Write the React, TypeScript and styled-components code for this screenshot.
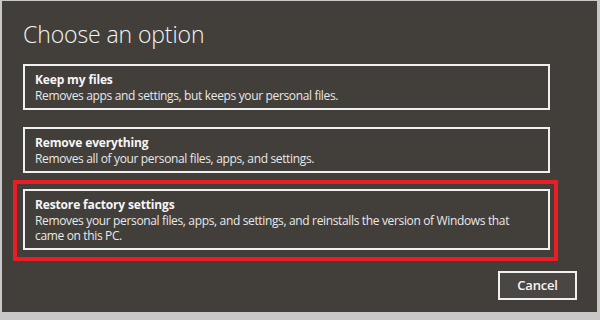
import React from "react";
import styled, { createGlobalStyle } from "styled-components";

const Global = createGlobalStyle`
  html, body { margin: 0; padding: 0; background: #c7c7c7; }
  body { font-family: "Open Sans", "Noto Sans", sans-serif; }
`;

const Backdrop = styled.div`
  width: 600px;
  height: 320px;
  box-sizing: border-box;
  padding: 1px 3px 8px 2px;
  background: #c8c8c8;
  overflow: hidden;
`;

const Panel = styled.div`
  height: 100%;
  box-sizing: border-box;
  background: #423f3b;
  padding: 18px 20px 0 21px;
  display: flex;
  flex-direction: column;
  color: #f2f2f2;
`;

const Title = styled.h1`
  margin: 0 0 14px 0;
  font-weight: 300;
  font-size: 23px;
  line-height: 31px;
  letter-spacing: -0.1px;
  color: #f4f4f4;
`;

const Options = styled.div`
  display: flex;
  flex-direction: column;
  gap: 17px;
`;

const Option = styled.button<{ $tall?: boolean }>`
  all: unset;
  box-sizing: border-box;
  width: 527px;
  min-height: ${(p) => (p.$tall ? 61 : 45)}px;
  border: 2px solid #f0f0f0;
  padding: 6px 10px 5px 10px;
  display: flex;
  flex-direction: column;
  font-family: "Open Sans", "Noto Sans", sans-serif;
  cursor: pointer;
`;

const OptionTitle = styled.span`
  font-size: 12px;
  font-weight: 700;
  line-height: 16px;
  color: #f6f6f6;
  letter-spacing: -0.15px;
`;

const OptionDesc = styled.span`
  font-size: 12px;
  font-weight: 400;
  line-height: 15px;
  color: #e8e8e8;
  letter-spacing: -0.35px;
`;

const Highlight = styled.div`
  margin: -10px 0 0 -10px;
  width: 545px;
  box-sizing: border-box;
  border: 4px solid #ec1c24;
  padding: 5px 4px 7px 6px;
`;

const Footer = styled.div`
  display: flex;
  justify-content: flex-end;
  margin-top: 10px;
`;

const CancelButton = styled.button`
  all: unset;
  box-sizing: border-box;
  width: 79px;
  height: 29px;
  border: 2px solid #f0f0f0;
  background: #4a4643;
  color: #f6f6f6;
  font-family: "Open Sans", "Noto Sans", sans-serif;
  font-size: 13px;
  font-weight: 600;
  text-align: center;
  line-height: 25px;
  letter-spacing: -0.2px;
  cursor: pointer;
`;

export default function App() {
  return (
    <>
      <Global />
      <Backdrop>
        <Panel>
          <Title>Choose an option</Title>
          <Options>
            <Option>
              <OptionTitle>Keep my files</OptionTitle>
              <OptionDesc>Removes apps and settings, but keeps your personal files.</OptionDesc>
            </Option>
            <Option>
              <OptionTitle>Remove everything</OptionTitle>
              <OptionDesc>Removes all of your personal files, apps, and settings.</OptionDesc>
            </Option>
            <Highlight>
              <Option $tall>
                <OptionTitle>Restore factory settings</OptionTitle>
                <OptionDesc>
                  Removes your personal files, apps, and settings, and reinstalls the version of Windows that came on this PC.
                </OptionDesc>
              </Option>
            </Highlight>
          </Options>
          <Footer>
            <CancelButton>Cancel</CancelButton>
          </Footer>
        </Panel>
      </Backdrop>
    </>
  );
}
